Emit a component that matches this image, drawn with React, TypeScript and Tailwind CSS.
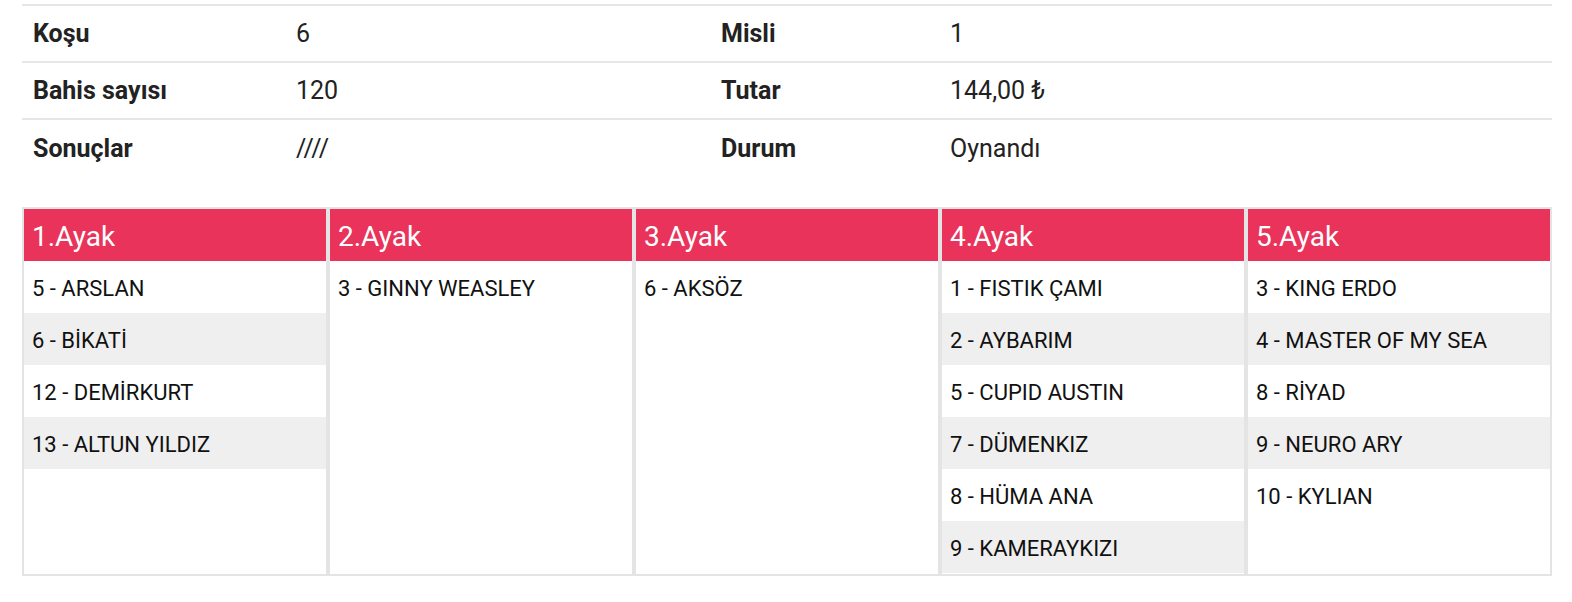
const info = [
  ["Koşu", "6", "Misli", "1"],
  ["Bahis sayısı", "120", "Tutar", "144,00 ₺"],
  ["Sonuçlar", "////", "Durum", "Oynandı"],
];

const legs = [
  { title: "1.Ayak", horses: ["5 - ARSLAN", "6 - BİKATİ", "12 - DEMİRKURT", "13 - ALTUN YILDIZ"] },
  { title: "2.Ayak", horses: ["3 - GINNY WEASLEY"] },
  { title: "3.Ayak", horses: ["6 - AKSÖZ"] },
  {
    title: "4.Ayak",
    horses: ["1 - FISTIK ÇAMI", "2 - AYBARIM", "5 - CUPID AUSTIN", "7 - DÜMENKIZ", "8 - HÜMA ANA", "9 - KAMERAYKIZI"],
  },
  { title: "5.Ayak", horses: ["3 - KING ERDO", "4 - MASTER OF MY SEA", "8 - RİYAD", "9 - NEURO ARY", "10 - KYLIAN"] },
];

const App = () => {
  return (
    <div className="min-h-screen bg-white text-[#222] font-['Roboto',sans-serif] pl-[22px] pt-[4px]">
      <div className="w-[1530px]">
        {/* Kupon bilgisi */}
        <div className="border-t-2 border-[#e6e6e6]">
          {info.map((row, i) => (
            <div
              key={i}
              className={`flex items-center h-[57px] text-[25px] ${i < info.length - 1 ? "border-b-2 border-[#e6e6e6]" : ""}`}
            >
              <div className="w-[263px] pl-[11px] font-bold">{row[0]}</div>
              <div className="w-[425px] pl-[11px]">{row[1]}</div>
              <div className="w-[229px] pl-[11px] font-bold">{row[2]}</div>
              <div className="flex-1 pl-[11px]">{row[3]}</div>
            </div>
          ))}
        </div>

        {/* Ayaklar */}
        <div className="mt-[30px] bg-[#e4e4e4] p-[2px] flex gap-[4px] h-[369px]">
          {legs.map((leg) => (
            <div key={leg.title} className="w-[302px] bg-white flex flex-col">
              <div className="h-[52px] bg-[#e9335a] text-white text-[28px] pl-[8px] pt-[3px] flex items-center">
                {leg.title}
              </div>
              {leg.horses.map((h, j) => (
                <div
                  key={h}
                  className={`h-[52px] flex items-center pl-[8px] pt-[2px] text-[22px] text-[#111] ${j % 2 === 1 ? "bg-[#efefef]" : "bg-white"}`}
                >
                  {h}
                </div>
              ))}
            </div>
          ))}
        </div>
      </div>
    </div>
  );
};

export default App;
